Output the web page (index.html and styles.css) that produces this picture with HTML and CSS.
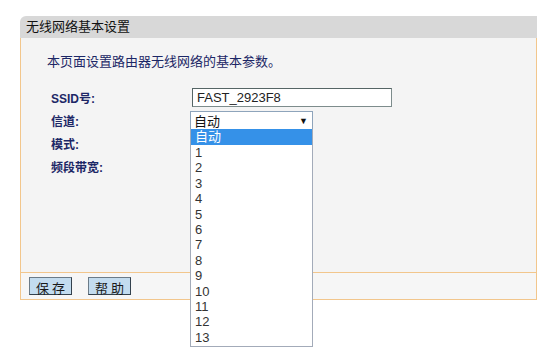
FILE: index.html
```html
<!DOCTYPE html>
<html lang="zh-CN">

<head>
    <meta charset="UTF-8">
    <title>无线网络基本设置</title>
    <link rel="stylesheet" href="styles.css">
</head>

<body>
    <div class="panel">
        <div class="panel-title">无线网络基本设置</div>

        <div class="panel-body">
            <p class="intro">本页面设置路由器无线网络的基本参数。</p>

            <div class="form">
                <label class="label">SSID号:</label>
                <div class="field">
                    <input type="text" class="text-input" value="FAST_2923F8">
                </div>

                <label class="label">信道:</label>
                <div class="field">
                    <div class="select-wrap">
                        <div class="select-box">
                            <span>自动</span>
                            <span class="arrow">▼</span>
                        </div>
                        <ul class="dropdown">
                            <li class="selected">自动</li>
                            <li>1</li>
                            <li>2</li>
                            <li>3</li>
                            <li>4</li>
                            <li>5</li>
                            <li>6</li>
                            <li>7</li>
                            <li>8</li>
                            <li>9</li>
                            <li>10</li>
                            <li>11</li>
                            <li>12</li>
                            <li>13</li>
                        </ul>
                    </div>
                </div>

                <label class="label">模式:</label>
                <div class="field"></div>

                <label class="label">频段带宽:</label>
                <div class="field"></div>
            </div>
        </div>

        <div class="panel-footer">
            <button class="btn">保存</button>
            <button class="btn">帮助</button>
        </div>
    </div>
</body>

</html>
```

FILE: styles.css
```css
* {
    box-sizing: border-box;
    font-family: "Liberation Sans", "Noto Sans CJK SC", sans-serif;
}

html,
body {
    min-height: 100vh;
}

body {
    background-color: #fff;
    margin: 0;
    padding: 0;
}

.panel {
    padding: 16px 0 0 20px;
    width: 537px;
}

.panel-title {
    height: 22px;
    line-height: 22px;
    padding-left: 6px;
    background-color: #d8d8d8;
    border-top-left-radius: 6px;
    color: #111;
    font-size: 13px;
}

.panel-body {
    height: 234px;
    padding: 15px 0 0 26px;
    background-color: #f4f4f4;
    border-left: 1px solid #f2c68c;
    border-right: 1px solid #f2c68c;
}

.intro {
    margin: 0;
    line-height: 17px;
    font-size: 13px;
    color: #1c2766;
}

.form {
    display: grid;
    grid-template-columns: 141px 1fr;
    grid-auto-rows: 23px;
    margin-top: 16px;
    padding-left: 4px;
}

.label {
    display: flex;
    align-items: center;
    font-size: 12px;
    font-weight: bold;
    color: #1c2766;
}

.field {
    display: flex;
    align-items: center;
}

.text-input {
    width: 200px;
    height: 19px;
    padding: 0 4px;
    border: 1px solid #556565;
    border-right-color: #7d8c8c;
    border-bottom-color: #7d8c8c;
    background-color: #fff;
    font-size: 13px;
    color: #222;
}

.select-wrap {
    position: relative;
    margin-left: -2px;
}

.select-box {
    display: flex;
    justify-content: space-between;
    align-items: center;
    width: 123px;
    height: 19px;
    padding: 0 4px 0 3px;
    border: 1px solid #8ea4bb;
    background-color: #fff;
    font-size: 13px;
    color: #111;
}

.arrow {
    font-size: 9px;
}

.dropdown {
    position: absolute;
    top: 18px;
    left: 0;
    z-index: 2;
    width: 123px;
    margin: 0;
    padding: 0 0 1px;
    list-style: none;
    background-color: #fff;
    border: 1px solid #a3abb9;
    border-top: none;
}

.dropdown li {
    height: 15.4px;
    line-height: 15.4px;
    padding-left: 4px;
    font-size: 13px;
    color: #333;
}

.dropdown li.selected {
    height: 16px;
    line-height: 16px;
    background-color: #3591e8;
    color: #fff;
}

.panel-footer {
    display: flex;
    align-items: center;
    gap: 16px;
    height: 28px;
    padding-left: 8px;
    background-color: #f6f6f6;
    border: 1px solid #f2c68c;
}

.btn {
    width: 43px;
    height: 18px;
    padding: 0 0 0 3px;
    border: 1px solid #33414d;
    border-top-color: #6b7b88;
    border-left-color: #6b7b88;
    background-color: #c3dcef;
    font-size: 13px;
    letter-spacing: 3px;
    color: #1a1a1a;
    cursor: pointer;
}
```
